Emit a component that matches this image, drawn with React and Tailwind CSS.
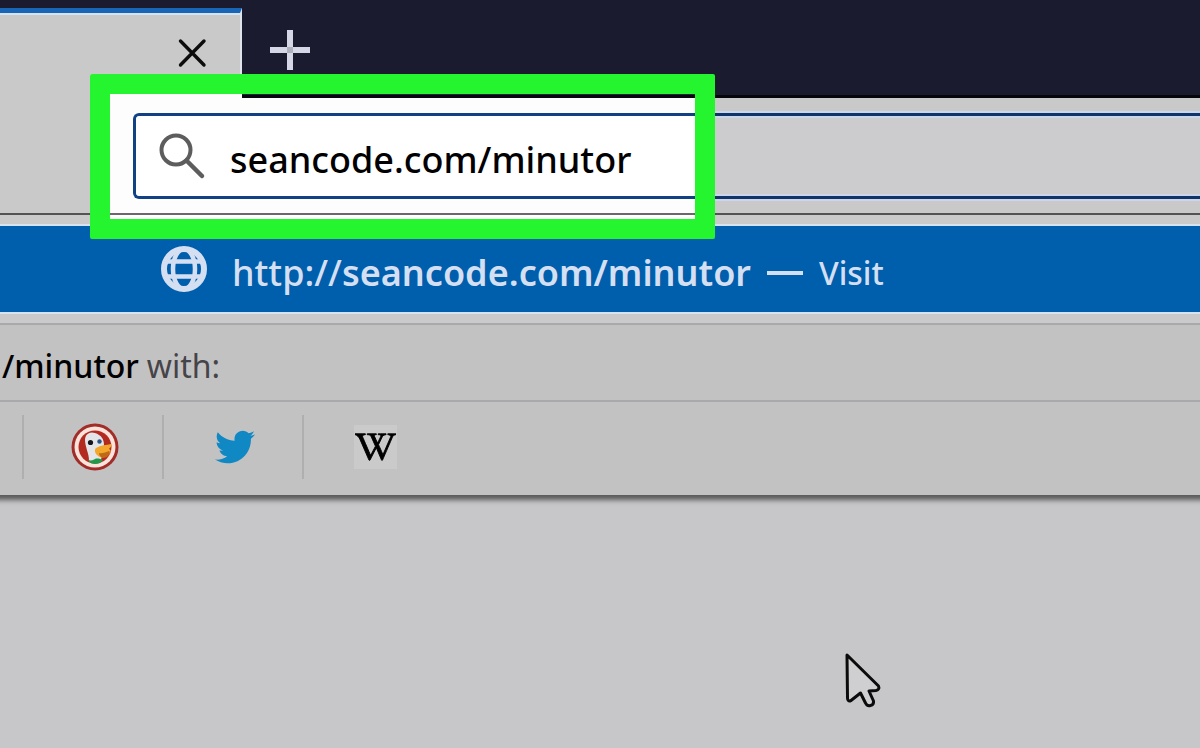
import React from "react";
import { FaTwitter, FaWikipediaW } from "react-icons/fa";

function CloseIcon() {
  return (
    <svg className="h-8 w-8" viewBox="0 0 32 32" fill="none" stroke="#0c0c0c" strokeWidth="3.4" strokeLinecap="round" aria-hidden="true">
      <path d="M4.500 4 28 28M28 4 4.500 28" />
    </svg>
  );
}

function PlusIcon() {
  return (
    <svg className="h-10 w-10" viewBox="0 0 40 40" aria-hidden="true">
      <path d="M17 0h6v17h17v6H23v17h-6V23H0v-6h17z" fill="#d6d7e6" />
      <path d="M17 17h6v6h-6z" fill="#aeb0bd" />
    </svg>
  );
}

function SearchIcon() {
  return (
    <svg className="h-12 w-12 shrink-0" viewBox="0 0 48 48" fill="none" stroke="#4a4a4a" aria-hidden="true">
      <circle cx="18" cy="18" r="14.500" strokeWidth="4" />
      <path d="M28.500 28.500 44 44" strokeWidth="4.500" strokeLinecap="round" />
    </svg>
  );
}

function GlobeIcon() {
  return (
    <svg className="h-12 w-12 shrink-0" viewBox="0 0 48 48" fill="none" stroke="#d5dff2" aria-hidden="true">
      <circle cx="24" cy="24" r="20" strokeWidth="6" />
      <ellipse cx="24" cy="24" rx="11" ry="20" strokeWidth="4.500" />
      <path d="M5 16.500h38M5 31.500h38" strokeWidth="4.500" />
    </svg>
  );
}

function DuckIcon() {
  return (
    <svg className="h-12 w-12" viewBox="0 0 48 48" aria-hidden="true">
      <circle cx="24" cy="24" r="23.500" fill="#a12c28" />
      <circle cx="24" cy="24" r="20.500" fill="#fbe3dc" />
      <circle cx="24" cy="24" r="16.500" fill="#b32a20" />
      <path d="M18 38C18 30 14 24 14 17c0-6 5-9 10-7 6 2 9 6 9 12l-3 15c-3 4-9 4-12 1z" fill="#e4e5e8" />
      <path d="M17 37c4 1 5 0 7-1s6 0 8 1c-2 3-5 4-8 4s-5-1-7-4z" fill="#23984a" />
      <path d="M25 25c5-3 10-3 15-4 1 2-1 4-2 5 2 1 2 2 1 4-3 5-10 6-13 2-2-2-3-5-1-7z" fill="#f3a72b" />
      <path d="M28 30c3 1 7-1 10-2 2 2 0 4-2 6-4 2-8 0-8-4z" fill="#c06a18" />
      <circle cx="19.500" cy="19.500" r="2.600" fill="#15171d" />
      <circle cx="28.500" cy="18.500" r="2.200" fill="#2b5584" />
    </svg>
  );
}

function Cursor() {
  return (
    <svg className="absolute left-[843px] top-[651px] h-[60px] w-10" viewBox="0 0 40 60" aria-hidden="true">
      <path
        d="M4 4 35.500 35Q37 38.500 33 39.500L26 40 30.500 50Q31 54 27.500 54.500 24 55.500 22.500 52L17.500 42 8 49.500Q4.500 51 4.500 47z"
        fill="#cfced0"
        stroke="#0b0b0b"
        strokeWidth="3"
        strokeLinejoin="round"
      />
    </svg>
  );
}

function Engine({ label, children }) {
  return (
    <button type="button" aria-label={label} className="flex h-16 w-[140px] items-center justify-center border-l-2 border-[#b0afb0] pl-1">
      {children}
    </button>
  );
}

export default function App() {
  return (
    <div className="relative min-h-screen overflow-hidden bg-[#c7c6c8] font-['Noto_Sans','Open_Sans',sans-serif] text-black">
      <header className="flex h-[98px] items-end bg-[#1b1b30]">
        <div className="flex h-[90px] w-[242px] items-start justify-end border-r-2 border-t-[5px] border-r-[#dfe3ec] border-t-[#1765b4] bg-[#c9c9c9] shadow-[inset_0_2px_0_#d6e3f5]">
          <button type="button" aria-label="Close tab" className="mr-8 mt-6">
            <CloseIcon />
          </button>
        </div>
        <div className="flex h-[90px] flex-1 items-start border-b-[3px] border-[#05050a]">
          <button type="button" aria-label="New tab" className="ml-7 mt-[22px]">
            <PlusIcon />
          </button>
        </div>
      </header>

      <div className="border-b-2 border-[#565355] bg-[#c9c9c9] pb-3.5 pl-[133px] pt-[15px]">
        <label className="-mr-2 flex h-[86px] items-center rounded-l-md border-y-[3px] border-l-[3px] border-[#0f3469] bg-[#cccbcd] pl-[22px] shadow-[0_0_0_2px_#ccd5ea,inset_0_0_0_2px_#ccd5ea]">
          <SearchIcon />
          <input
            aria-label="Address"
            defaultValue="seancode.com/minutor"
            className="ml-6 h-16 min-w-0 flex-1 bg-transparent pt-1.5 text-[36px] font-medium outline-none"
          />
        </label>
      </div>

      <main className="-mx-2 bg-[#c3c2c3] px-2 shadow-[0_5px_5px_0_rgba(0,0,0,0.55)]">
        <div className="-mx-2 bg-[#cbcacb] py-[9px]">
          <a
            href="http://seancode.com/minutor"
            className="flex h-[90px] items-center whitespace-nowrap border-y-2 border-[#d6e3f3] bg-[#005fad] pl-[168px] text-[36px] text-[#d5dff2]"
          >
            <GlobeIcon />
            <span className="ml-6 pt-2 font-medium">
              http://<span className="font-semibold">seancode.com/minutor</span>
            </span>
            <span className="ml-4 mt-2 h-1 w-9 bg-[#d5dff2]" />
            <span className="ml-4 pt-2 text-[32px] font-medium">Visit</span>
          </a>
        </div>
        <p className="-mx-2 flex h-[79px] items-center whitespace-nowrap border-y-2 border-[#a9a8aa] pl-2.5 pt-1.5 text-[32px]">
          <span className="font-medium">/minutor</span>
          <span className="ml-2 text-[#454449]">with:</span>
        </p>
        <div className="flex h-[93px] items-center pb-1 pl-[22px]">
          <Engine label="DuckDuckGo">
            <DuckIcon />
          </Engine>
          <Engine label="Twitter">
            <FaTwitter className="h-10 w-10 text-[#1088c4]" />
          </Engine>
          <Engine label="Wikipedia">
            <span className="bg-[#cbcacb] px-px">
              <FaWikipediaW className="h-11 w-[41px]" stroke="currentColor" strokeWidth="14" />
            </span>
          </Engine>
        </div>
      </main>

      <div className="pointer-events-none absolute left-[90px] top-[74px] h-[165px] w-[625px] rounded-xs border-[20px] border-[#24f52f] backdrop-brightness-[1.26]" />
      <Cursor />
    </div>
  );
}
